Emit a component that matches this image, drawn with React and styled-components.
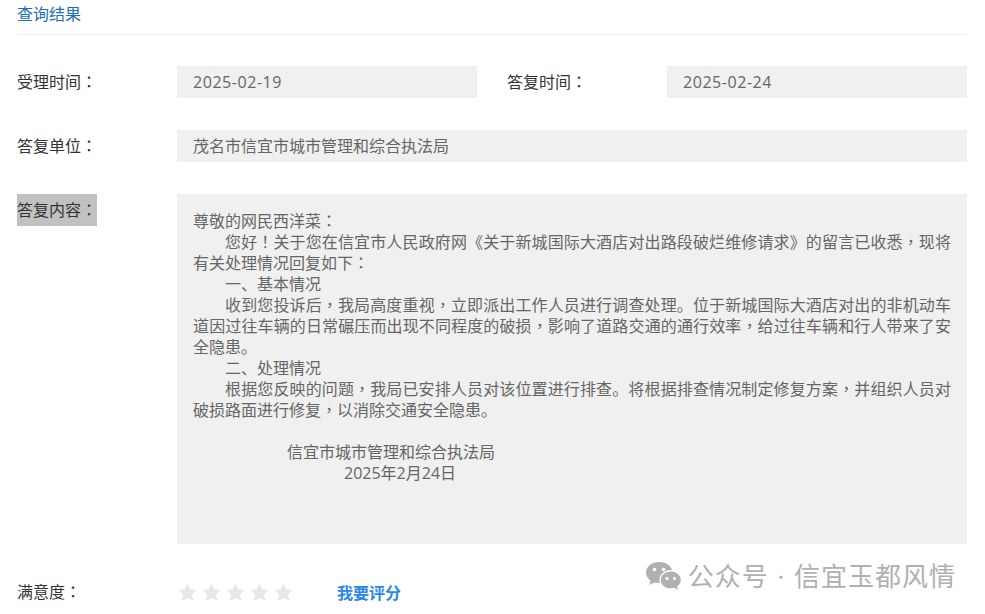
import React from "react";
import styled, { createGlobalStyle } from "styled-components";

const Global = createGlobalStyle`
  html, body { margin: 0; padding: 0; background: #fff; }
  body {
    font-family: "Open Sans", "Noto Sans CJK SC", sans-serif;
    font-size: 16px;
    color: #333;
    overflow: hidden;
    text-spacing-trim: space-all;
  }
`;
const Page = styled.div`
  position: relative;
  width: 950px;
  height: 614px;
  padding: 0 18px 0 17px;
`;
const Title = styled.div`
  height: 34px;
  line-height: 29px;
  color: #1f6fb5;
  border-bottom: 1px solid #eee;
  margin-bottom: 31px;
`;
const Row = styled.div`
  display: flex;
  margin-bottom: 32px;
`;
const Label = styled.div`
  width: 160px;
  flex: none;
  height: 32px;
  line-height: 32px;
  white-space: nowrap;
`;
const Selected = styled.span`
  display: block;
  width: 80px;
  height: 32px;
  background: #c1c1c1;
`;
const Value = styled.div`
  flex: ${p => (p.$width ? "none" : 1)};
  width: ${p => (p.$width ? `${p.$width}px` : "auto")};
  margin-right: ${p => p.$gap || 0}px;
  height: 32px;
  line-height: 32px;
  padding: 0 16px;
  box-sizing: border-box;
  background: #f0f0f0;
  color: #666;
  letter-spacing: ${p => (p.$date ? "0.55px" : "0")};
`;
const Body = styled.div`
  flex: 1;
  height: 350px;
  padding: 17px 16px 15px;
  box-sizing: border-box;
  background: #f0f0f0;
  color: #666;
  line-height: 21px;
  text-align: justify;
`;
const Para = styled.div`
  text-indent: ${p => p.$indent || 0}px;
  min-height: 21px;
`;
const Punct = styled.span`
  font-family: "Noto Sans CJK TC", sans-serif;
  line-height: 0;
`;
const RateRow = styled.div`
  display: flex;
  align-items: center;
  height: 32px;
`;
const Stars = styled.div`
  display: flex;
  gap: 7px;
  width: 158px;
  padding-left: 2px;
`;
const RateLink = styled.a`
  color: #2b86e6;
  font-weight: 700;
`;
const Watermark = styled.div`
  position: absolute;
  right: 29px;
  top: 558px;
  display: flex;
  align-items: center;
  gap: 7px;
  color: #b0b0b0;
  font-size: 26px;
  line-height: 36px;
  letter-spacing: 1px;
  word-spacing: 1px;
  white-space: nowrap;
`;

const T = ({ children }) =>
  children.split(/([：，！])/).map((part, i) =>
    i % 2 ? <Punct key={i}>{part}</Punct> : part
  );

const Star = () => (
  <svg width="17" height="17" viewBox="0 0 17 17">
    <path d="M8.500 1.200 10.800 5.900 16 6.600 12.300 10.200 13.200 15.500 8.500 13 3.800 15.500 4.700 10.200 1 6.600 6.200 5.900Z" fill="#e7e7e7" stroke="#e7e7e7" strokeWidth="1.500" strokeLinejoin="round" />
  </svg>
);
const WeChat = () => (
  <svg width="36" height="30" viewBox="0 0 36 30">
    <path d="M14 1C6.800 1 1 5.700 1 11.600c0 3.300 1.800 6.200 4.600 8.200L4.400 24l5-2.600c1.400.4 3 .7 4.600.7h.9a10 10 0 0 1-.5-3c0-5.600 5.300-10 11.800-10h.9C25.900 4.500 20.500 1 14 1Z" fill="#b0b0b0" />
    <circle cx="9.500" cy="8.500" r="1.800" fill="#fff" />
    <circle cx="18.500" cy="8.500" r="1.800" fill="#fff" />
    <path d="M25.800 10.500c-5.600 0-10 3.700-10 8.400s4.400 8.400 10 8.400c1.200 0 2.300-.2 3.300-.5l3.900 2-1-3.400c2.300-1.500 3.800-3.900 3.800-6.500 0-4.700-4.400-8.400-10-8.400Z" fill="#b0b0b0" />
    <circle cx="22" cy="17.500" r="1.500" fill="#fff" />
    <circle cx="29.500" cy="17.500" r="1.500" fill="#fff" />
  </svg>
);

export default function App() {
  return (
    <Page>
      <Global />
      <Title>查询结果</Title>
      <Row>
        <Label><T>受理时间：</T></Label>
        <Value $width={300} $gap={30} $date>2025-02-19</Value>
        <Label><T>答复时间：</T></Label>
        <Value $date>2025-02-24</Value>
      </Row>
      <Row>
        <Label><T>答复单位：</T></Label>
        <Value>茂名市信宜市城市管理和综合执法局</Value>
      </Row>
      <Row>
        <Label><Selected><T>答复内容：</T></Selected></Label>
        <Body>
          <Para><T>尊敬的网民西洋菜：</T></Para>
          <Para $indent={32}><T>您好！关于您在信宜市人民政府网《关于新城国际大酒店对出路段破烂维修请求》的留言已收悉，现将有关处理情况回复如下：</T></Para>
          <Para $indent={32}>一、基本情况</Para>
          <Para $indent={32}><T>收到您投诉后，我局高度重视，立即派出工作人员进行调查处理。位于新城国际大酒店对出的非机动车道因过往车辆的日常碾压而出现不同程度的破损，影响了道路交通的通行效率，给过往车辆和行人带来了安全隐患。</T></Para>
          <Para $indent={32}>二、处理情况</Para>
          <Para $indent={32}><T>根据您反映的问题，我局已安排人员对该位置进行排查。将根据排查情况制定修复方案，并组织人员对破损路面进行修复，以消除交通安全隐患。</T></Para>
          <Para />
          <Para $indent={94}>信宜市城市管理和综合执法局</Para>
          <Para $indent={151}>2025年2月24日</Para>
        </Body>
      </Row>
      <RateRow>
        <Label><T>满意度：</T></Label>
        <Stars><Star /><Star /><Star /><Star /><Star /></Stars>
        <RateLink>我要评分</RateLink>
      </RateRow>
      <Watermark><WeChat />公众号 · 信宜玉都风情</Watermark>
    </Page>
  );
}
